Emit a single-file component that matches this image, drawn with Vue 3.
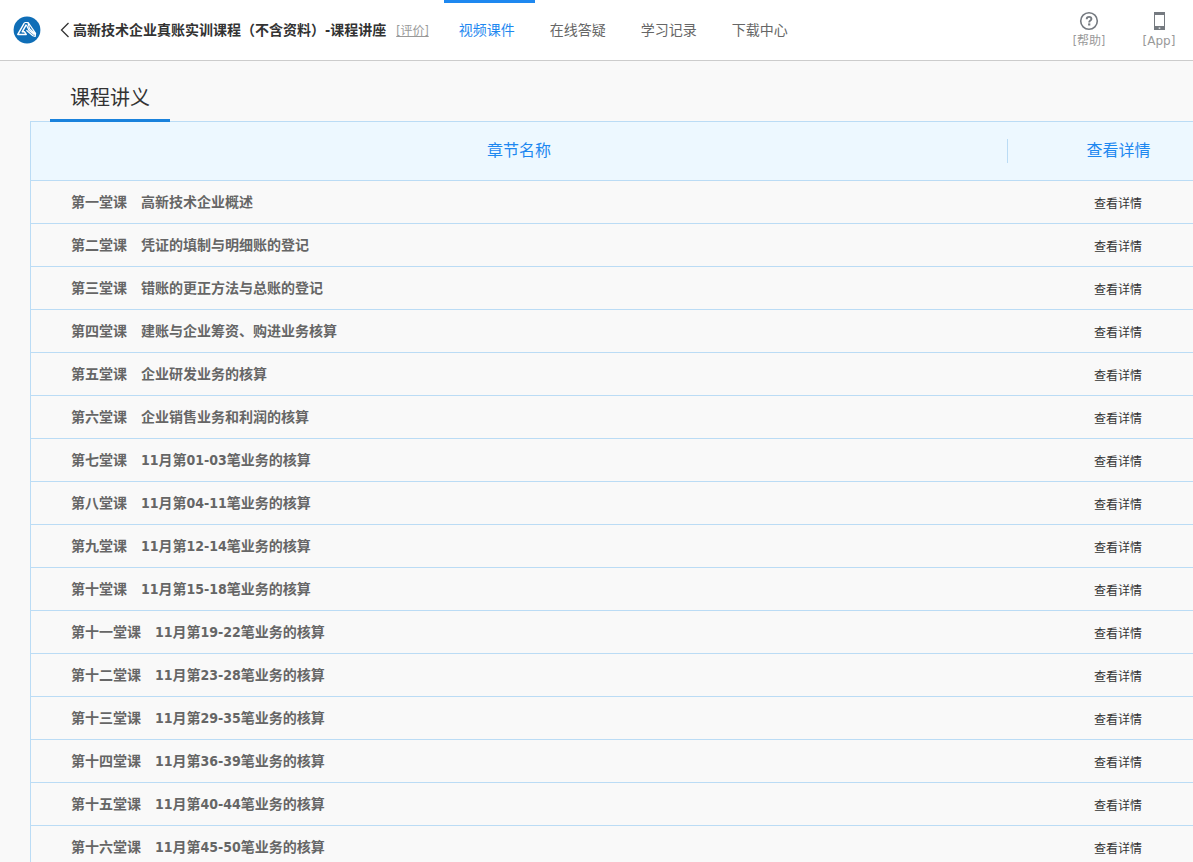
<script setup>
const navItems = ['视频课件', '在线答疑', '学习记录', '下载中心']

const lessons = [
  ['第一堂课', '高新技术企业概述'],
  ['第二堂课', '凭证的填制与明细账的登记'],
  ['第三堂课', '错账的更正方法与总账的登记'],
  ['第四堂课', '建账与企业筹资、购进业务核算'],
  ['第五堂课', '企业研发业务的核算'],
  ['第六堂课', '企业销售业务和利润的核算'],
  ['第七堂课', '11月第01-03笔业务的核算'],
  ['第八堂课', '11月第04-11笔业务的核算'],
  ['第九堂课', '11月第12-14笔业务的核算'],
  ['第十堂课', '11月第15-18笔业务的核算'],
  ['第十一堂课', '11月第19-22笔业务的核算'],
  ['第十二堂课', '11月第23-28笔业务的核算'],
  ['第十三堂课', '11月第29-35笔业务的核算'],
  ['第十四堂课', '11月第36-39笔业务的核算'],
  ['第十五堂课', '11月第40-44笔业务的核算'],
  ['第十六堂课', '11月第45-50笔业务的核算'],
]
</script>

<template>
  <div class="page">
    <header class="topbar">
      <a class="logo" href="#" aria-label="首页">
        <svg viewBox="0 0 28 28" width="28" height="28" aria-hidden="true">
          <circle cx="14" cy="14" r="13.4" fill="#0f6eb7" />
          <path
            d="M11.3 7 4.8 18.4h8.4l-1.7-2.6H9.2L13.3 8.6"
            fill="none" stroke="#fff" stroke-width="1.5" stroke-linejoin="round"
          />
          <path
            d="M11.3 6.5h3.9l7.4 10.8-.4 3.2-2.3-.8-6.5-5.4M13.5 9l2.4 5.2 5.6 4.6M15 6.8l1.6 6 5.5 5.2"
            fill="none" stroke="#fff" stroke-width="1.2" stroke-linejoin="round"
          />
        </svg>
      </a>
      <a class="back" href="#" aria-label="返回">
        <svg viewBox="0 0 10 16" width="10" height="16" aria-hidden="true">
          <path d="M8.5 1 1.5 8l7 7" fill="none" stroke="#333" stroke-width="1.3" />
        </svg>
      </a>
      <h1 class="title">高新技术企业真账实训课程（不含资料）-课程讲座</h1>
      <a class="rate" href="#">[评价]</a>
      <nav class="nav">
        <a
          v-for="(item, i) in navItems"
          :key="item"
          href="#"
          class="nav-item"
          :class="{ active: i === 0 }"
        >{{ item }}</a>
      </nav>
      <div class="tools">
        <a class="tool" href="#">
          <svg viewBox="0 0 20 20" width="20" height="20" aria-hidden="true">
            <circle cx="10" cy="10" r="8.3" fill="none" stroke="#757a80" stroke-width="1.6" />
            <path
              d="M7.7 8.2c0-1.5 1-2.3 2.4-2.3 1.3 0 2.3.8 2.3 2 0 1.7-2.2 1.7-2.2 3.5"
              fill="none" stroke="#757a80" stroke-width="1.9"
            />
            <rect x="9.1" y="12.4" width="2.2" height="2.1" fill="#757a80" />
          </svg>
          <span>[帮助]</span>
        </a>
        <a class="tool" href="#">
          <svg viewBox="0 0 20 20" width="20" height="20" aria-hidden="true">
            <path
              fill="#757a80" fill-rule="evenodd"
              d="M5 1h11v18H5zM6 4v11h9V4zM9.7 16.5v1.3h1.6v-1.3z"
            />
          </svg>
          <span class="latin">[App]</span>
        </a>
      </div>
    </header>

    <main class="content">
      <h2 class="tab">课程讲义</h2>
      <table class="lessons">
        <thead>
          <tr>
            <th scope="col" class="chapter">章节名称</th>
            <th scope="col" class="detail"><div class="divided">查看详情</div></th>
          </tr>
        </thead>
        <tbody>
          <tr v-for="[no, name] in lessons" :key="no">
            <td class="name"><span>{{ no }}</span><span>{{ name }}</span></td>
            <td class="detail"><a href="#">查看详情</a></td>
          </tr>
        </tbody>
      </table>
    </main>
  </div>
</template>

<style>
html {
  background: #f9f9f9;
  scrollbar-width: none;
}
</style>

<style scoped>
.page {
  min-height: 100vh;
  overflow-x: clip;
  background: #f9f9f9;
  color: #333;
  font-family: "DejaVu Sans Condensed", "Noto Sans CJK SC", sans-serif;
  font-size: 14px;
}

a {
  color: inherit;
  text-decoration: none;
}

.topbar {
  display: flex;
  height: 60px;
  padding: 0 4px 0 13px;
  align-items: center;
  border-bottom: 1px solid #ccc;
  background: #fff;
  white-space: nowrap;
}

.logo,
.back {
  display: flex;
}

.back {
  margin: 0 3px 0 19px;
}

.title {
  margin: 0;
  font-size: 14px;
  line-height: 20px;
}

.topbar .rate {
  margin: 0 15px 0 10px;
  padding-bottom: 2px;
  color: #999;
  font-size: 12px;
  text-decoration: underline;
  text-decoration-skip-ink: none;
}

.nav {
  display: flex;
  align-self: stretch;
}

.nav-item {
  padding: 0 20px 0 15px;
  border-top: 3px solid transparent;
  color: #666;
  line-height: 54px;
}

.nav-item.active {
  border-color: #1e88f0;
  color: #1e88f0;
}

.tools {
  display: flex;
  margin-left: auto;
  gap: 10px;
}

.tool {
  display: flex;
  width: 60px;
  padding-top: 2px;
  flex-direction: column;
  align-items: center;
  color: #999;
  font-size: 12px;
  line-height: 20px;
}

.latin {
  font-family: "DejaVu Sans", sans-serif;
}

.content {
  padding: 12px 0 0 30px;
}

.tab {
  position: relative;
  width: max-content;
  margin: 0 0 -1px 20px;
  padding: 4px 20px 0;
  border-bottom: 3px solid #1a82dc;
  font-size: 20px;
  font-weight: 400;
  line-height: 42px;
}

/* The table runs past the right edge of the window. */
.lessons {
  width: calc(100% + 37px);
  border: solid #bbdcf5;
  border-width: 1px 1px 0;
  border-spacing: 0;
  table-layout: fixed;
}

.lessons th,
.lessons td {
  height: 42px;
  padding: 0;
  border-bottom: 1px solid #bbdcf5;
}

.lessons th {
  height: 58px;
  background: #edf8ff;
  color: #1e88f0;
  font-size: 16px;
  font-weight: 400;
}

.lessons .chapter {
  height: 54px;
  padding-bottom: 4px;
}

.lessons .detail {
  width: 222px;
  text-align: center;
}

.divided {
  border-left: 1px solid #bbdcf5;
  line-height: 24px;
}

.lessons .name {
  height: 40px;
  padding: 0 0 2px 40px;
  color: #666;
  font-weight: 700;
}

.name span + span {
  margin-left: 14px;
}

td.detail {
  font-size: 12px;
}
</style>
